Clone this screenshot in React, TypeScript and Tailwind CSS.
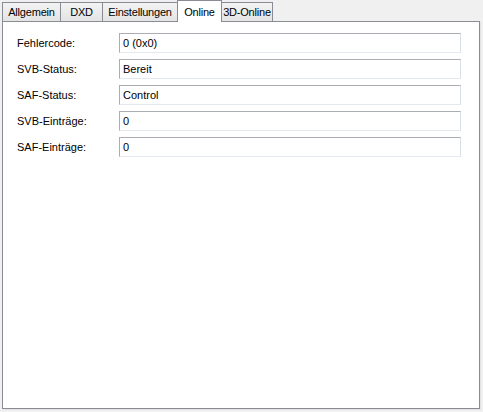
const tabs = [
  { label: "Allgemein", w: "w-[59px]" },
  { label: "DXD", w: "w-[43px]" },
  { label: "Einstellungen", w: "w-[76px]" },
  { label: "Online", w: "w-[45px]", active: true },
  { label: "3D-Online", w: "w-[52px]" },
];

const fields = [
  { label: "Fehlercode:", value: "0 (0x0)" },
  { label: "SVB-Status:", value: "Bereit" },
  { label: "SAF-Status:", value: "Control" },
  { label: "SVB-Einträge:", value: "0" },
  { label: "SAF-Einträge:", value: "0" },
];

export default function App() {
  return (
    <div className="flex h-[412px] w-[483px] flex-col bg-[#f0f0f0] text-[11px] text-black [font-family:'Liberation_Sans',Arial,sans-serif]">
      <div className="relative z-10 flex h-[21px] items-end pl-[2px]">
        {tabs.map((tab) =>
          tab.active ? (
            <div
              key={tab.label}
              className={`${tab.w} -mb-px -ml-px flex h-[22px] items-start justify-center whitespace-nowrap border border-b-0 border-[#898c95] bg-white pt-[3px] tracking-[-0.2px]`}
            >
              {tab.label}
            </div>
          ) : (
            <div
              key={tab.label}
              className={`${tab.w} flex h-[19px] items-center justify-center whitespace-nowrap border border-b-0 border-[#898c95] bg-gradient-to-b from-[#f3f3f3] to-[#e4e4e4] tracking-[-0.2px] [&:not(:first-child)]:-ml-px`}
            >
              {tab.label}
            </div>
          ),
        )}
      </div>
      <div className="ml-[2px] h-[388px] w-[478px] border border-[#898c95] bg-white shadow-[1px_1px_0_#e3e3e3]">
        <div className="flex flex-col gap-[6px] pt-[11px]">
          {fields.map((field) => (
            <div key={field.label} className="flex h-[20px] items-center">
              <span className="w-[116px] pl-[14px]">{field.label}</span>
              <div className="flex h-[20px] w-[342px] items-center border border-[#abadb3] border-b-[#e3e9ef] border-r-[#dbdfe6] bg-white pl-[3px]">
                {field.value}
              </div>
            </div>
          ))}
        </div>
      </div>
    </div>
  );
}
